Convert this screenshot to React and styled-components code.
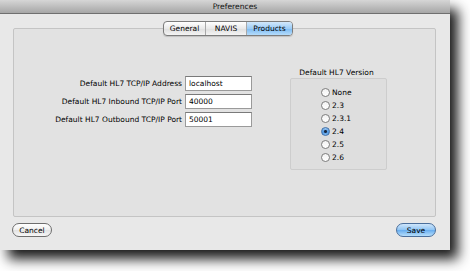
import React from 'react';
import styled, { createGlobalStyle } from 'styled-components';

const GlobalStyle = createGlobalStyle`
  html, body {
    margin: 0;
    padding: 0;
    background: #ffffff;
  }
  body {
    font-family: "DejaVu Sans", "Liberation Sans", sans-serif;
    font-size: 7.5px;
    color: #000;
  }
`;

const Page = styled.div`
  width: 470px;
  height: 271px;
  overflow: hidden;
`;

const Window = styled.div`
  width: 450px;
  height: 250px;
  display: flex;
  flex-direction: column;
  background: #e8e8e8;
  box-shadow: 8px 9px 12px rgba(0, 0, 0, 0.9);
`;

const TitleBar = styled.div`
  height: 13px;
  display: flex;
  align-items: center;
  justify-content: center;
  padding-left: 20px;
  background: linear-gradient(#d6d6d6, #a6a6a6);
  border-bottom: 1px solid #6f6f6f;
  color: #111;
  font-size: 7.6px;
`;

const Body = styled.div`
  flex: 1;
  display: flex;
  flex-direction: column;
  padding: 14px 14px 0 13px;
`;

const TabBox = styled.div`
  position: relative;
  height: 189px;
  background: #e2e2e2;
  border: 1px solid #c4c4c4;
  border-radius: 2px;
  box-sizing: border-box;
`;

const Tabs = styled.div`
  position: absolute;
  top: -8px;
  left: 149px;
  display: flex;
  height: 13px;
  border: 1px solid #7c7c7c;
  border-radius: 4px;
  overflow: hidden;
  background: linear-gradient(#ffffff, #e9e9e9 50%, #dedede 51%, #f4f4f4);
  box-shadow: 0 1px 1px rgba(0, 0, 0, 0.15);
`;

const Tab = styled.div`
  width: ${(p) => p.$w}px;
  display: flex;
  align-items: center;
  justify-content: center;
  font-size: 7.5px;
  color: #000;
  border-left: ${(p) => (p.$first ? 'none' : '1px solid #a8a8a8')};
  background: ${(p) =>
    p.$active ? 'linear-gradient(#d3e8fb, #9cccf6 50%, #7bbaf2 51%, #b5dcfb)' : 'transparent'};
`;

const Content = styled.div`
  display: flex;
  align-items: flex-start;
  padding: 37px 0 0 17px;
`;

const Form = styled.div`
  display: grid;
  grid-template-columns: 151px 67px;
  column-gap: 3px;
  row-gap: 3px;
  align-items: center;
  margin-top: 10px;
`;

const Label = styled.div`
  justify-self: end;
  white-space: nowrap;
`;

const Input = styled.div`
  height: 15px;
  box-sizing: border-box;
  background: #fff;
  border: 1px solid #9a9a9a;
  border-top-color: #7a7a7a;
  padding-left: 3px;
  display: flex;
  align-items: center;
`;

const VersionGroup = styled.div`
  margin-left: 38px;
  width: 97px;
  display: flex;
  flex-direction: column;
`;

const GroupTitle = styled.div`
  height: 12px;
  display: flex;
  align-items: center;
  justify-content: center;
  padding-right: 4px;
`;

const GroupBox = styled.div`
  height: 92px;
  box-sizing: border-box;
  border: 1px solid #cdcdcd;
  border-radius: 2px;
  background: #dedede;
  padding: 7px 0 0 30px;
  display: flex;
  flex-direction: column;
`;

const RadioRow = styled.div`
  height: 13px;
  display: flex;
  align-items: center;
  gap: 2px;
`;

const RadioDot = styled.span`
  width: 9px;
  height: 9px;
  border-radius: 50%;
  box-sizing: border-box;
  border: 1px solid ${(p) => (p.$on ? '#3d6ea8' : '#7d7d7d')};
  background: ${(p) =>
    p.$on
      ? 'radial-gradient(circle at 50% 50%, #1b2a40 0 1.3px, transparent 1.6px), linear-gradient(#9fcaf2, #4d95e0 55%, #7fb8ef)'
      : 'linear-gradient(#f2f2f2, #ffffff)'};
`;

const Footer = styled.div`
  flex: 1;
  display: flex;
  justify-content: space-between;
  align-items: flex-start;
  padding: 6px 0 0;
`;

const Button = styled.div`
  height: 14px;
  width: ${(p) => p.$w}px;
  box-sizing: border-box;
  border-radius: 8px;
  display: flex;
  align-items: center;
  justify-content: center;
  font-size: 7.5px;
  border: 1px solid ${(p) => (p.$primary ? '#4b6f9c' : '#6e6e6e')};
  background: ${(p) =>
    p.$primary
      ? 'linear-gradient(#cfe6fb, #8ec4f4 50%, #66acef 51%, #b6defb)'
      : 'linear-gradient(#ffffff, #efefef 50%, #e2e2e2 51%, #f7f7f7)'};
  margin-left: ${(p) => p.$ml || 0}px;
`;

const versions = ['None', '2.3', '2.3.1', '2.4', '2.5', '2.6'];

export default function App() {
  return (
    <Page>
      <GlobalStyle />
      <Window>
        <TitleBar>Preferences</TitleBar>
        <Body>
          <TabBox>
            <Tabs>
              <Tab $w={41} $first>General</Tab>
              <Tab $w={40}>NAVIS</Tab>
              <Tab $w={45} $active>Products</Tab>
            </Tabs>
            <Content>
              <Form>
                <Label>Default HL7 TCP/IP Address</Label>
                <Input>localhost</Input>
                <Label>Default HL7 Inbound TCP/IP Port</Label>
                <Input>40000</Input>
                <Label>Default HL7 Outbound TCP/IP Port</Label>
                <Input>50001</Input>
              </Form>
              <VersionGroup>
                <GroupTitle>Default HL7 Version</GroupTitle>
                <GroupBox>
                  {versions.map((v) => (
                    <RadioRow key={v}>
                      <RadioDot $on={v === '2.4'} />
                      {v}
                    </RadioRow>
                  ))}
                </GroupBox>
              </VersionGroup>
            </Content>
          </TabBox>
          <Footer>
            <Button $w={40} $ml={-1}>Cancel</Button>
            <Button $w={40} $primary>Save</Button>
          </Footer>
        </Body>
      </Window>
    </Page>
  );
}
